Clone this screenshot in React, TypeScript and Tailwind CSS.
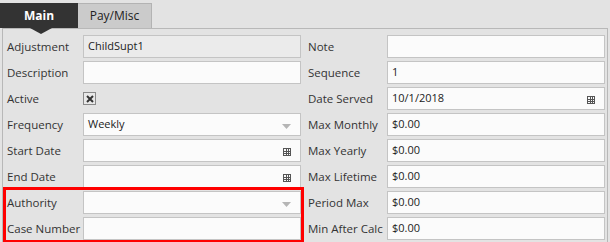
import React from "react";

const font = { fontFamily: '"Open Sans", "Noto Sans", Arial, sans-serif' };

function Arrow() {
  return (
    <svg width="9" height="5" viewBox="0 0 9 5" className="absolute right-[9px] top-[10px]">
      <path d="M0 0 L9 0 L4.5 5 Z" fill="#b5b5b5" />
    </svg>
  );
}

function Cal() {
  return (
    <svg width="8" height="8" viewBox="0 0 8 8" className="absolute right-[9px] top-[8px]">
      <rect x="0" y="0" width="8" height="8" fill="#555" />
      <rect x="1" y="1" width="2" height="2" fill="#fafafa" />
      <rect x="4" y="1" width="1" height="2" fill="#fafafa" />
      <rect x="6" y="1" width="1" height="2" fill="#fafafa" />
      <rect x="1" y="4" width="2" height="1" fill="#fafafa" />
      <rect x="4" y="4" width="1" height="1" fill="#fafafa" />
      <rect x="6" y="4" width="1" height="1" fill="#fafafa" />
      <rect x="1" y="6" width="2" height="1" fill="#fafafa" />
      <rect x="4" y="6" width="1" height="1" fill="#fafafa" />
      <rect x="6" y="6" width="1" height="1" fill="#fafafa" />
    </svg>
  );
}

type Kind = "text" | "disabled" | "select" | "date" | "check";

function Field({ value, kind = "text" }: { value?: string; kind?: Kind }) {
  if (kind === "check") {
    return (
      <div className="h-[23px] flex items-center">
        <div className="w-[13px] h-[13px] border border-[#8a8a8a] bg-[#e8e8e8] flex items-center justify-center">
          <svg width="8" height="8" viewBox="0 0 8 8">
            <path d="M1 1 L7 7 M7 1 L1 7" stroke="#333" strokeWidth="2" />
          </svg>
        </div>
      </div>
    );
  }
  const bg = kind === "disabled" ? "bg-[#ebebeb]" : "bg-[#fbfbfb]";
  return (
    <div className={`relative h-[23px] border border-[#c4c4c4] ${bg} flex items-center pl-[4px] text-[11px] text-[#222] whitespace-nowrap`}>
      {value}
      {kind === "select" && <Arrow />}
      {kind === "date" && <Cal />}
    </div>
  );
}

function Row({ label, lw, value, kind }: { label: string; lw: string; value?: string; kind?: Kind }) {
  return (
    <div className="flex items-center">
      <div className={`${lw} shrink-0 text-[11.5px] text-[#333] leading-none whitespace-nowrap`}>{label}</div>
      <div className="w-[218px]">
        <Field value={value} kind={kind} />
      </div>
    </div>
  );
}

export default function App() {
  const left: [string, string?, Kind?][] = [
    ["Adjustment", "ChildSupt1", "disabled"],
    ["Description", "", "text"],
    ["Active", "", "check"],
    ["Frequency", "Weekly", "select"],
    ["Start Date", "", "date"],
    ["End Date", "", "date"],
    ["Authority", "", "select"],
    ["Case Number", "", "text"],
  ];
  const right: [string, string?, Kind?][] = [
    ["Note", "", "text"],
    ["Sequence", "1", "text"],
    ["Date Served", "10/1/2018", "date"],
    ["Max Monthly", "$0.00", "text"],
    ["Max Yearly", "$0.00", "text"],
    ["Max Lifetime", "$0.00", "text"],
    ["Period Max", "$0.00", "text"],
    ["Min After Calc", "$0.00", "text"],
  ];
  return (
    <div className="w-[610px] h-[242px] bg-[#e3e3e3] overflow-hidden relative" style={font}>
      <div className="flex h-[28px] pt-[3px]">
        <div className="relative w-[78px] bg-[#333333] text-white font-bold text-[12px] flex items-center justify-center">
          Main
          <div className="absolute left-[30px] top-[25px] w-0 h-0 border-l-[11px] border-r-[11px] border-t-[6px] border-l-transparent border-r-transparent border-t-[#333333] z-10" />
        </div>
        <div className="w-[74px] bg-[#cbcbcb] border-t border-r border-[#b3b3b3] text-[#222] text-[12px] flex items-center justify-center">
          Pay/Misc
        </div>
      </div>
      <div className="ml-[2px] w-[606px] h-[214px] border-t border-l border-r border-[#b8b8b8] pt-[6px] pl-[4px] flex gap-[7px]">
        <div className="flex flex-col gap-[3px]">
          {left.map(([l, v, k]) => (
            <Row key={l} label={l} lw="w-[76px]" value={v} kind={k} />
          ))}
        </div>
        <div className="flex flex-col gap-[3px]">
          {right.map(([l, v, k]) => (
            <Row key={l} label={l} lw="w-[79px]" value={v} kind={k} />
          ))}
        </div>
      </div>
      <div className="absolute left-[3px] top-[187px] w-[301px] h-[56px] border-[3px] border-[#ff0000]" />
    </div>
  );
}
